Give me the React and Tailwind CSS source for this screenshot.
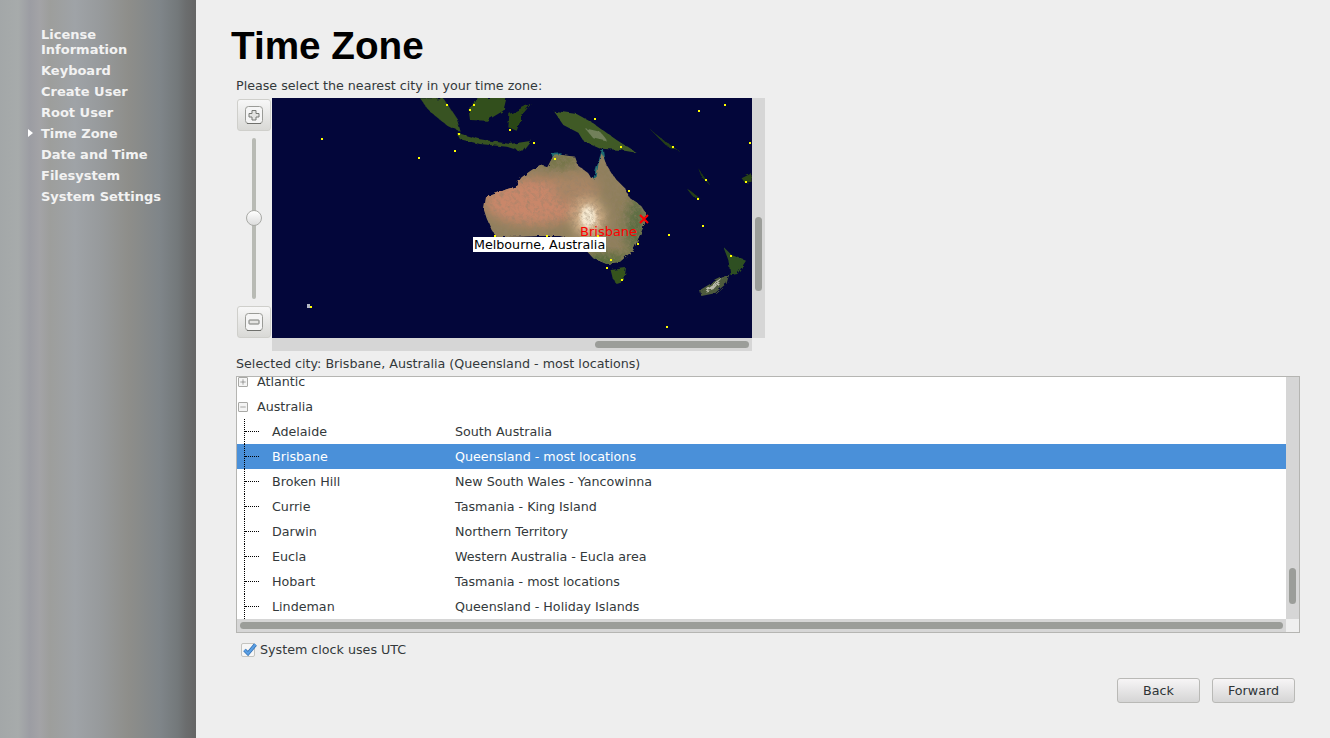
import { Minus, Plus } from "lucide-react";

const cities = [
  { name: "Adelaide", region: "South Australia" },
  { name: "Brisbane", region: "Queensland - most locations", selected: true },
  { name: "Broken Hill", region: "New South Wales - Yancowinna" },
  { name: "Currie", region: "Tasmania - King Island" },
  { name: "Darwin", region: "Northern Territory" },
  { name: "Eucla", region: "Western Australia - Eucla area" },
  { name: "Hobart", region: "Tasmania - most locations" },
  { name: "Lindeman", region: "Queensland - Holiday Islands" },
];

const steps = [
  { name: "License Information" },
  { name: "Keyboard" },
  { name: "Create User" },
  { name: "Root User" },
  { name: "Time Zone", active: true },
  { name: "Date and Time" },
  { name: "Filesystem" },
  { name: "System Settings" },
];

// city dots, in map pixels
const dots = [
  [201, 6], [197, 11], [237, 31], [261, 44], [322, 20], [348, 48], [282, 60], [400, 48],
  [426, 12], [452, 6], [477, 44], [433, 81], [473, 83], [356, 92], [425, 100], [430, 127],
  [396, 136], [365, 145], [222, 137], [274, 137], [325, 137], [338, 161], [334, 169],
  [349, 181], [458, 157], [394, 228], [174, 6], [186, 35], [49, 40], [146, 59], [182, 52],
  [38, 208],
];

const ausPath =
  "M78 322 L110 310 L140 298 L165 290 L185 262 L215 240 L240 225 L262 232 L280 198 L305 195 L345 200 L355 228 L385 250 L395 268 L410 262 L415 225 L425 190 L440 225 L465 265 L495 295 L510 325 L540 345 L555 365 L555 400 L535 445 L520 480 L480 515 L440 522 L400 505 L375 478 L350 452 L300 438 L240 438 L180 440 L110 442 L95 420 L80 385 L72 360 Z";

const WorldMap = () => (
  <svg width="480" height="240" viewBox="0 0 480 240" className="block">
    <defs>
      <clipPath id="ausClip">
        <path d={ausPath} />
      </clipPath>
      <filter id="rough" x="-10%" y="-10%" width="120%" height="120%">
        <feTurbulence type="fractalNoise" baseFrequency="0.05" numOctaves="3" seed="4" result="n" />
        <feDisplacementMap in="SourceGraphic" in2="n" scale="14" />
      </filter>
      <filter id="blob" x="-50%" y="-50%" width="200%" height="200%">
        <feGaussianBlur stdDeviation="18" />
      </filter>
      <filter id="hot" x="-50%" y="-50%" width="200%" height="200%">
        <feGaussianBlur stdDeviation="8" />
      </filter>
      <filter id="grain" x="0" y="0" width="100%" height="100%">
        <feTurbulence type="fractalNoise" baseFrequency="0.09" numOctaves="3" seed="9" />
        <feColorMatrix values="0 0 0 0 0.3  0 0 0 0 0.22  0 0 0 0 0.14  1.2 0 0 0 -0.5" />
      </filter>
    </defs>
    <rect width="480" height="240" fill="#03063a" />
    {/* land, drawn at 3x of the map crop */}
    <g transform="translate(188,-8) scale(0.3333)">
      <g filter="url(#rough)">
        <path fill="#1d6a72" d="M398 272 L412 225 L428 172 L436 225 L415 272 Z" />
        <path fill="#1d6a72" d="M275 192 L305 190 L300 210 L280 210 Z" />
        <g clipPath="url(#ausClip)">
          <rect x="60" y="180" width="510" height="350" fill="#8f7f5c" />
          <ellipse cx="220" cy="335" rx="150" ry="70" fill="#c9876a" filter="url(#blob)" />
          <ellipse cx="350" cy="300" rx="70" ry="50" fill="#a98565" filter="url(#blob)" />
          <ellipse cx="530" cy="410" rx="30" ry="90" fill="#586c40" filter="url(#blob)" />
          <ellipse cx="440" cy="515" rx="70" ry="22" fill="#4a6632" filter="url(#blob)" />
          <ellipse cx="300" cy="212" rx="60" ry="16" fill="#67703f" filter="url(#blob)" />
          <ellipse cx="385" cy="385" rx="48" ry="60" fill="#d8b48c" filter="url(#blob)" />
          <ellipse cx="385" cy="382" rx="24" ry="34" fill="#f8ecd4" filter="url(#hot)" />
          <rect x="60" y="180" width="510" height="350" filter="url(#grain)" />
        </g>
        <path fill="#34521f" d="M452 540 L498 534 L492 575 L470 582 L458 565 Z" />
        <path fill="#2f5022" d="M790 470 L815 495 L858 512 L832 552 L812 556 L805 510 Z" />
        <path fill="#4e5a3c" d="M808 552 L770 570 L720 600 L724 618 L765 610 L800 580 Z" />
        <path fill="#b8b8a8" d="M790 565 L745 595 L735 605 L760 598 Z" />
        <path fill="#3f5a28" d="M280 62 L350 72 L400 100 L470 150 L530 188 L480 180 L425 176 L370 152 L355 128 L310 105 Z" />
        <path fill="#71805a" d="M375 115 L420 125 L445 155 L400 145 Z" />
        <path fill="#324f1c" d="M25 50 L60 25 L140 22 L130 62 L80 92 L30 90 Z" />
        <path fill="#2b4618" d="M148 72 L215 40 L190 70 L170 122 L145 112 Z" />
        <path fill="#375220" d="M-10 128 L60 148 L150 162 L216 152 L190 185 L140 170 L60 162 L0 148 Z" />
        <path fill="#264018" d="M570 118 L610 150 L662 186 L620 168 Z" />
        <path fill="#264018" d="M680 295 L722 326 L700 320 Z" />
        <path fill="#1e3816" d="M715 235 L750 285 L725 262 Z" />
        <path fill="#2a4519" d="M845 265 L875 250 L875 275 L855 278 Z" />
        <path fill="#375222" d="M-120 25 L-50 25 L-10 85 L2 125 L-40 105 L-90 65 Z" />
      </g>
    </g>
    <path fill="#b4b8c4" d="M35 206 h3 v4 h-3 Z" />
    {dots.map(([x, y], i) => (
      <rect key={i} x={x} y={y} width="2" height="2" fill="#ffff00" />
    ))}
    <path d="M368 117 L376 125 M376 117 L368 125" stroke="#ff0000" strokeWidth="2" />
  </svg>
);

const ZoomButton = ({ glyph }) => (
  <button className="w-[34px] h-[32px] flex items-center justify-center rounded-[3px] border border-[#cfcfcb] bg-gradient-to-b from-[#f7f7f7] to-[#d9d9d6]">
    <svg width="18" height="18" viewBox="0 0 18 18">
      <rect x="0.5" y="0.5" width="17" height="17" rx="3" fill="#f5f5f5" stroke="#9a9b97" />
      <path d="M2 17.5 h14" stroke="#6f706c" />
      <path d={glyph} fill="#e4e4e2" stroke="#777974" />
    </svg>
  </button>
);

const Button = ({ children }) => (
  <button className="w-[83px] h-[25px] rounded-[3px] border border-[#b9b9b6] bg-gradient-to-b from-[#f7f5f6] to-[#d5d5d5] text-[#2e3436] text-[12.7px]">
    {children}
  </button>
);

const Expander = ({ children }) => (
  <span className="w-[10px] h-[10px] ml-[1px] mr-[9px] flex items-center justify-center border border-[#a8a8a5] rounded-[1px] bg-[#f4f4f4] text-[#555753]">
    {children}
  </span>
);

const App = () => {
  return (
    <div className="w-[1330px] h-[738px] flex overflow-hidden bg-[#eeeeee] text-[#33393b] text-[12.7px] font-['DejaVu_Sans',sans-serif]">
      {/* Sidebar */}
      <div className="w-[196px] shrink-0 pt-[27px] pl-[41px] bg-[linear-gradient(90deg,#a3a7a8_0px,#a7abab_18px,#9c9da3_30px,#a3a3a6_40px,#9d9e9c_50px,#9fa3a7_75px,#979a9c_100px,#8e8e8a_128px,#7f8589_160px,#73787a_178px,#6b6d6e_186px,#656565_196px)]">
        {steps.map((step) => (
          <div key={step.name} className="relative w-[125px] pb-[6px] font-bold text-[13px] leading-[15px] text-[#f2f2f2]">
            {step.active && (
              <span className="absolute left-[-13px] top-[3px] w-0 h-0 border-y-[4px] border-l-[5px] border-y-transparent border-l-white" />
            )}
            {step.name}
          </div>
        ))}
      </div>

      {/* Main content */}
      <div className="flex-1 min-w-0 flex flex-col pl-[35px]">
        <h1 className="h-[72px] pt-[23px] text-[38.7px] leading-[46px] font-bold text-black font-['Liberation_Sans',sans-serif]">
          Time Zone
        </h1>
        <div className="h-[26px] pl-[5px] pt-[6px] leading-[16px]">Please select the nearest city in your time zone:</div>

        {/* Map with zoom controls */}
        <div className="flex pl-[6px]">
          <div className="w-[35px] h-[240px] pt-px flex flex-col">
            <ZoomButton glyph="M7 4.5 h4 v3 h3 v3.5 h-3 v3 h-4 v-3 h-3 v-3.5 h3 Z" />
            <div className="relative flex-1 flex justify-center pr-px">
              <div className="w-[4px] my-[7px] rounded-full bg-[#b8bab4]" />
              <div className="absolute top-[79px] left-[9px] w-[16px] h-[16px] rounded-full border border-[#a9aaa6] bg-gradient-to-b from-white to-[#dcdcdc]" />
            </div>
            <ZoomButton glyph="M4.5 7 h9 a0.5 0.5 0 0 1 0.5 0.5 v3 a0.5 0.5 0 0 1 -0.5 0.5 h-9 a0.5 0.5 0 0 1 -0.5 -0.5 v-3 a0.5 0.5 0 0 1 0.5 -0.5 Z" />
          </div>
          <div className="w-[493px]">
            <div className="flex h-[240px]">
              <div className="relative w-[480px] h-[240px]">
                <WorldMap />
                <span className="absolute left-[308px] top-[126px] text-[#ff0000] text-[13px] leading-[16px]">Brisbane</span>
                <span className="absolute left-[201px] top-[139px] h-[15px] px-px bg-white text-black leading-[15px] whitespace-nowrap">Melbourne, Australia</span>
              </div>
              <div className="w-[13px] bg-[#d6d6d6] pt-[119px] px-[3px]">
                <div className="h-[74px] rounded-full bg-[#9b9d99]" />
              </div>
            </div>
            <div className="w-[480px] h-[13px] bg-[#d6d6d6] pt-[3px] pl-[323px] pr-[3px]">
              <div className="h-[7px] rounded-full bg-[#9b9d99]" />
            </div>
          </div>
        </div>

        <div className="h-[25px] pl-[5px] pt-[5px] leading-[16px]">Selected city: Brisbane, Australia (Queensland - most locations)</div>

        {/* City tree */}
        <div className="w-[1064px] ml-[5px] h-[257px] border border-[#b5b5b2] bg-white flex flex-col">
          <div className="flex flex-1 min-h-0">
            <div className="flex-1 min-w-0 h-[242px] overflow-hidden">
              <div className="-mt-[8px]">
                <div className="h-[25px] flex items-center">
                  <Expander><Plus size={8} strokeWidth={1.5} /></Expander>
                  Atlantic
                </div>
                <div className="h-[25px] flex items-center">
                  <Expander><Minus size={8} strokeWidth={1.5} /></Expander>
                  Australia
                </div>
                {cities.map((city) => (
                  <div
                    key={city.name}
                    className={`h-[25px] flex items-center pl-[7px] ${city.selected ? "bg-[#4a90d9] text-white" : ""}`}
                  >
                    <div className="h-full flex items-center border-l border-dotted border-black">
                      <div className="w-[14px] border-t border-dotted border-black" />
                    </div>
                    <span className="w-[196px] pl-[13px]">{city.name}</span>
                    <span>{city.region}</span>
                  </div>
                ))}
              </div>
            </div>
            <div className="w-[13px] h-[242px] bg-[#d6d6d6] pt-[191px] px-[3px]">
              <div className="h-[36px] rounded-full bg-[#9b9d99]" />
            </div>
          </div>
          <div className="flex h-[13px]">
            <div className="flex-1 bg-[#d6d6d6] pt-[3px] pl-[3px] pr-[3px]">
              <div className="h-[7px] rounded-full bg-[#9b9d99]" />
            </div>
            <div className="w-[13px] bg-[#efefef]" />
          </div>
        </div>

        {/* UTC checkbox */}
        <div className="flex items-center h-[32px] pl-[10px] pt-[1px]">
          <span className="relative w-[14px] h-[14px] mr-[5px] rounded-[2px] border border-[#c4c4c0] bg-[#f6f6f6]">
            <svg width="16" height="14" viewBox="0 0 16 14" className="absolute left-0 top-[-2px]">
              <path d="M2.5 8 L6 11.5 L13.5 2.5" fill="none" stroke="#2f6cb0" strokeWidth="3.6" />
              <path d="M2.5 8 L6 11.5 L13.5 2.5" fill="none" stroke="#5a9fe4" strokeWidth="2.2" />
            </svg>
          </span>
          System clock uses UTC
        </div>

        <div className="flex justify-end gap-[12px] pr-[35px] pt-[13px]">
          <Button>Back</Button>
          <Button>Forward</Button>
        </div>
      </div>
    </div>
  );
};

export default App;
